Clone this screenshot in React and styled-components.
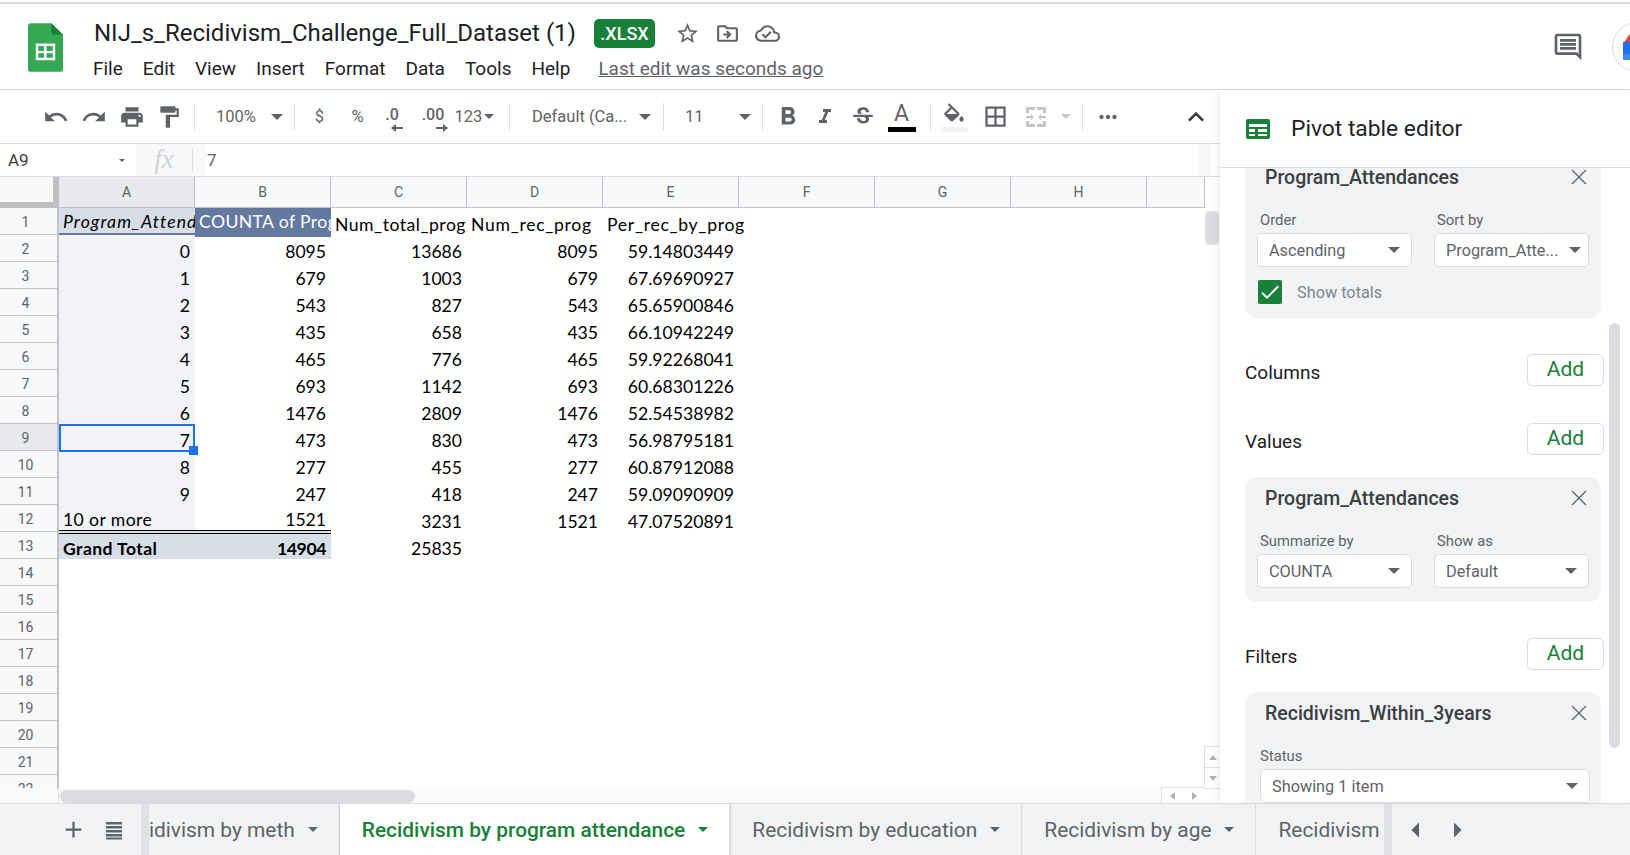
import styled, { createGlobalStyle } from 'styled-components';
import {
  MdUndo, MdRedo, MdPrint, MdFormatPaint, MdFormatBold, MdFormatItalic, MdStrikethroughS,
  MdBorderAll, MdMoreHoriz, MdExpandLess, MdStarBorder, MdOutlineDriveFileMove,
  MdOutlineCloudDone, MdOutlineComment, MdCheck, MdAdd, MdArrowLeft, MdArrowRight,
} from 'react-icons/md';

const rows = [
  ['0', '8095', '13686', '8095', '59.14803449'],
  ['1', '679', '1003', '679', '67.69690927'],
  ['2', '543', '827', '543', '65.65900846'],
  ['3', '435', '658', '435', '66.10942249'],
  ['4', '465', '776', '465', '59.92268041'],
  ['5', '693', '1142', '693', '60.68301226'],
  ['6', '1476', '2809', '1476', '52.54538982'],
  ['7', '473', '830', '473', '56.98795181'],
  ['8', '277', '455', '277', '60.87912088'],
  ['9', '247', '418', '247', '59.09090909'],
];
const columns = ['A', 'B', 'C', 'D', 'E', 'F', 'G', 'H'];
const menus = ['File', 'Edit', 'View', 'Insert', 'Format', 'Data', 'Tools', 'Help'];

const Global = createGlobalStyle`
  html, body { margin: 0; padding: 0; background: #fff; }
  body { font-family: Roboto, "Liberation Sans", sans-serif; }
`;

const Page = styled.div`
  width: 1630px;
  height: 855px;
  overflow: hidden;
  display: flex;
  flex-direction: column;
  position: relative;
`;

/* header */
const Header = styled.header`
  height: 85px;
  margin-top: 2px;
  border-top: 2px solid #dadce0;
  border-bottom: 1px solid #dadce0;
  flex: none;
  display: flex;
  position: relative;
`;
const Logo = styled.svg`
  width: 35px;
  height: 49px;
  margin: 19px 0 0 28px;
  flex: none;
`;
const HeaderText = styled.div`
  margin-left: 31px;
  display: flex;
  flex-direction: column;
`;
const TitleRow = styled.div`
  display: flex;
  align-items: center;
  height: 30px;
  margin-top: 14px;
  color: #5f6368;
`;
const Title = styled.div`
  font-size: 24px;
  color: #202124;
  width: 500px;
  white-space: nowrap;
`;
const Badge = styled.span`
  width: 61px;
  height: 29px;
  border-radius: 5px;
  background: #188038;
  color: #fff;
  font-size: 18px;
  font-weight: 500;
  display: flex;
  align-items: center;
  justify-content: center;
`;
const TitleIcons = styled.div`
  display: flex;
  gap: 15px;
  margin-left: 20px;
  font-size: 25px;
  svg { display: block; }
`;
const MenuRow = styled.div`
  display: flex;
  align-items: center;
  margin: 7px 0 0 -1px;
  height: 26px;
  font-size: 19px;
  color: #202124;
`;
const Menu = styled.span`
  margin-right: 20px;
`;
const LastEdit = styled.span`
  margin-left: 8px;
  color: #5f6368;
  text-decoration: underline;
  white-space: nowrap;
`;
const HeaderRight = styled.div`
  margin-left: auto;
  display: flex;
  align-items: center;
  gap: 28px;
  margin-right: -32px;
  color: #5f6368;
  font-size: 32px;
  svg { display: block; }
`;
const Avatar = styled.div`
  width: 50px;
  height: 50px;
  border-radius: 50%;
  border: 1px solid #dadce0;
  box-sizing: border-box;
  overflow: hidden;
  display: flex;
  align-items: center;
  padding-left: 10px;
`;

/* body */
const Body = styled.div`
  flex: 1;
  display: flex;
  min-height: 0;
`;
const Main = styled.main`
  width: 1220px;
  flex: none;
  display: flex;
  flex-direction: column;
`;
const Toolbar = styled.div`
  height: 53px;
  flex: none;
  border-bottom: 1px solid #dadce0;
  display: flex;
  align-items: center;
  color: #5f6368;
`;
const Tool = styled.div`
  width: ${(p) => p.$w}px;
  height: ${(p) => p.$h || 30}px;
  margin-left: ${(p) => p.$ml || 0}px;
  padding: ${(p) => p.$pad || 0};
  gap: ${(p) => p.$gap || 0}px;
  box-sizing: border-box;
  flex: none;
  display: flex;
  align-items: center;
  justify-content: ${(p) => p.$justify || 'center'};
  font-size: ${(p) => p.$size || 26}px;
  color: ${(p) => p.$color || '#5f6368'};
  position: relative;
  svg { display: block; }
`;
const ToolText = styled(Tool)`
  font-size: 16.5px;
  white-space: nowrap;
`;
const Sep = styled.div`
  width: 1px;
  height: 27px;
  background: #dadce0;
  flex: none;
`;
const Caret = styled.span`
  width: 0;
  height: 0;
  flex: none;
  border-left: ${(p) => p.$s || 5}px solid transparent;
  border-right: ${(p) => p.$s || 5}px solid transparent;
  border-top: ${(p) => p.$s || 5}px solid ${(p) => p.$color || '#5f6368'};
`;
const StackIcon = styled.div`
  display: flex;
  flex-direction: column;
  align-items: center;
  font-size: 26px;
  gap: 1px;
  svg { display: block; }
`;
const ColorBar = styled.div`
  width: ${(p) => p.$w || 28}px;
  height: 5px;
  background: ${(p) => p.$c};
`;
const ColorLetter = styled.span`
  font-size: 23px;
  line-height: 24px;
  color: #5f6368;
`;
const Decimal = styled.div`
  font-size: 16px;
  font-weight: 500;
  line-height: 16px;
  display: flex;
  flex-direction: column;
  align-items: center;
  margin-top: 6px;
  svg { display: block; margin-left: ${(p) => p.$shift}px; }
`;

const FormulaBar = styled.div`
  height: 32px;
  flex: none;
  border-bottom: 1px solid #dadce0;
  display: flex;
  align-items: center;
  color: #3c4043;
  font-size: 17px;
`;
const NameBox = styled.div`
  width: 136px;
  padding: 0 11px 0 8px;
  box-sizing: border-box;
  display: flex;
  align-items: center;
  justify-content: space-between;
  flex: none;
`;
const Fx = styled.div`
  width: 71px;
  height: 100%;
  flex: none;
  background: #f8f9fa;
  display: flex;
  align-items: center;
  justify-content: flex-end;
`;
const FxGlyph = styled.span`
  font-family: "Liberation Serif", serif;
  font-style: italic;
  font-size: 27px;
  color: #d0d2d5;
  width: 57px;
  height: 24px;
  line-height: 23px;
  text-align: center;
  border-right: 1px solid #dadce0;
  margin-right: 14px;
  box-sizing: border-box;
`;
const FormulaValue = styled.div`
  flex: 1;
  color: #5f6368;
`;
const FormulaEnd = styled.div`
  width: 14px;
  height: 100%;
  margin-right: 9px;
  background: #f8f9fa;
`;

const Sheet = styled.div`
  flex: 1;
  min-height: 0;
  overflow: hidden;
  position: relative;
`;
const Grid = styled.div`
  display: grid;
  grid-template-columns: 59px repeat(8, 136px) 58px;
  grid-auto-rows: 27px;
  grid-template-rows: 31px;
  font-family: Lato, "Liberation Sans", sans-serif;
  font-size: 17.6px;
  color: #000;
`;
const Corner = styled.div`
  background: #f8f9fa;
  border-right: 6px solid #c0c0c0;
  border-bottom: 6px solid #c0c0c0;
  box-sizing: border-box;
`;
const ColHead = styled.div`
  font-family: Roboto, sans-serif;
  font-size: 14px;
  color: #5f6368;
  background: ${(p) => (p.$active ? '#e8eaed' : '#f8f9fa')};
  border-right: 1px solid #c0c4c8;
  border-bottom: 1px solid #c0c4c8;
  box-sizing: border-box;
  display: flex;
  align-items: center;
  justify-content: center;
`;
const RowHead = styled.div`
  font-family: Roboto, sans-serif;
  font-size: 14px;
  color: #5f6368;
  background: ${(p) => (p.$active ? '#e8eaed' : '#f8f9fa')};
  border-right: 2px solid #c0c4c8;
  border-bottom: 1px solid #c0c4c8;
  box-sizing: border-box;
  display: flex;
  align-items: center;
  justify-content: center;
  padding: 2px 6px 0 0;
`;
const Cell = styled.div`
  box-sizing: border-box;
  display: flex;
  align-items: flex-end;
  justify-content: ${(p) => (p.$right ? 'flex-end' : 'flex-start')};
  padding: 0 5px 1px 4px;
  white-space: nowrap;
  line-height: 18px;
  min-width: 0;
  overflow: ${(p) => (p.$spill ? 'visible' : 'hidden')};
  background: ${(p) => p.$bg || 'transparent'};
  color: ${(p) => p.$color || '#000'};
  font-style: ${(p) => (p.$italic ? 'italic' : 'normal')};
  font-weight: ${(p) => (p.$bold ? 700 : 400)};
  letter-spacing: ${(p) => p.$ls || 0}px;
`;
const HeadCell = styled(Cell)`
  height: 29px;
  border-bottom: ${(p) => (p.$band ? '4px solid #6479a0' : 'none')};
  line-height: ${(p) => (p.$band ? 20 : 22)}px;
`;
const TotalCell = styled(Cell)`
  margin-top: -2px;
  border-top: 4px double #000;
  line-height: 19px;
  padding-bottom: 1px;
`;
const LastRowCell = styled(Cell)`
  height: 25px;
  line-height: 21px;
  padding-bottom: 0;
`;
const Selection = styled.div`
  position: absolute;
  left: 59px;
  top: 247px;
  width: 136px;
  height: 28px;
  border: 2px solid #1a73e8;
  box-sizing: border-box;
  &::after {
    content: '';
    position: absolute;
    right: -5px;
    bottom: -5px;
    width: 9px;
    height: 9px;
    background: #1a73e8;
  }
`;
const VScroll = styled.div`
  position: absolute;
  top: 34px;
  right: 1px;
  width: 14px;
  height: 34px;
  background: #dadce0;
  border-radius: 5px;
`;
const SheetRail = styled.div`
  position: absolute;
  left: 0;
  right: 0;
  bottom: 0;
  height: 15px;
  background: #fafafa;
  display: flex;
  align-items: flex-end;
`;
const RailHead = styled.div`
  width: 59px;
  height: 100%;
  border-right: 1px solid #e0e0e0;
  box-sizing: border-box;
`;
const HScroll = styled.div`
  width: 355px;
  height: 13px;
  margin-left: 1px;
  background: #dadce0;
  border-radius: 7px;
`;
const ScrollBtns = styled.div`
  position: absolute;
  right: 0;
  bottom: 0;
  width: 15px;
  background: #fff;
  border-left: 1px solid #e0e0e0;
  display: flex;
  flex-direction: column;
`;
const ScrollBtn = styled.div`
  height: ${(p) => p.$h || 21}px;
  border-top: 1px solid #e0e0e0;
  box-sizing: border-box;
  display: flex;
  align-items: center;
  justify-content: center;
`;
const SmallUp = styled.span`
  border-left: 4px solid transparent;
  border-right: 4px solid transparent;
  border-bottom: 5px solid #b0b3b7;
`;
const SmallDown = styled.span`
  border-left: 4px solid transparent;
  border-right: 4px solid transparent;
  border-top: 5px solid #b0b3b7;
`;
const HBtns = styled.div`
  position: absolute;
  right: 15px;
  bottom: 0;
  height: 15px;
  width: 43px;
  border-left: 1px solid #e0e0e0;
  border-top: 1px solid #e0e0e0;
  background: #fff;
  display: flex;
  align-items: center;
  justify-content: space-around;
`;
const SmallLeft = styled.span`
  border-top: 4px solid transparent;
  border-bottom: 4px solid transparent;
  border-right: 5px solid #b0b3b7;
`;
const SmallRight = styled.span`
  border-top: 4px solid transparent;
  border-bottom: 4px solid transparent;
  border-left: 5px solid #b0b3b7;
`;

/* sidebar */
const Sidebar = styled.aside`
  width: 410px;
  flex: none;
  display: flex;
  flex-direction: column;
  position: relative;
  box-shadow: -3px 0 6px rgba(60, 64, 67, 0.08);
  background: #fff;
`;
const SideHead = styled.div`
  height: 77px;
  flex: none;
  border-bottom: 1px solid #dadce0;
  display: flex;
  align-items: center;
  padding-left: 26px;
  gap: 21px;
  font-size: 22.8px;
  color: #202124;
`;
const SideBody = styled.div`
  flex: 1;
  min-height: 0;
  overflow: hidden;
  padding-left: 25px;
`;
const Card = styled.section`
  width: 356px;
  background: #f1f3f4;
  border-radius: 12px;
  padding-bottom: 14px;
  margin-top: ${(p) => p.$top || 0}px;
`;
const CardTitle = styled.div`
  height: 42px;
  padding: 0 14px 0 20px;
  display: flex;
  align-items: center;
  justify-content: space-between;
  font-size: 19.5px;
  font-weight: 500;
  color: #3c4043;
  svg { display: block; }
`;
const Fields = styled.div`
  display: flex;
  gap: 22px;
  padding-left: 12px;
`;
const Field = styled.div`
  width: ${(p) => p.$w || 155}px;
`;
const FieldLabel = styled.div`
  height: 35px;
  padding: 12px 0 0 3px;
  box-sizing: border-box;
  font-size: 14.8px;
  line-height: 20px;
  color: #5f6368;
`;
const Select = styled.div`
  height: 34px;
  margin-left: ${(p) => p.$inset || 0}px;
  border: 1px solid #dadce0;
  border-radius: 5px;
  background: #fff;
  box-sizing: border-box;
  padding: 0 ${(p) => p.$pr || 11}px 0 11px;
  display: flex;
  align-items: center;
  justify-content: space-between;
  font-size: 16.3px;
  color: #5f6368;
  white-space: nowrap;
`;
const CheckRow = styled.div`
  display: flex;
  align-items: center;
  margin: 13px 0 0 13px;
  height: 24px;
  gap: 15px;
  font-size: 16.3px;
  color: #80868b;
`;
const Check = styled.div`
  width: 24px;
  height: 24px;
  background: #188038;
  border-radius: 2px;
  color: #fff;
  font-size: 24px;
  svg { display: block; }
`;
const Section = styled.div`
  width: 359px;
  height: 32px;
  margin: ${(p) => p.$top}px 0 ${(p) => p.$bottom}px;
  display: flex;
  align-items: center;
  justify-content: space-between;
`;
const SectionName = styled.span`
  font-size: 19px;
  padding-top: 4px;
  color: #202124;
`;
const AddButton = styled.button`
  width: 77px;
  height: 32px;
  border: 1px solid #dadce0;
  border-radius: 5px;
  background: #fff;
  color: #188038;
  font: 400 21px Roboto, sans-serif;
  padding: 0 0 2px;
`;
const SideScroll = styled.div`
  position: absolute;
  left: 389px;
  top: 233px;
  width: 11px;
  height: 425px;
  background: #dadce0;
  border-radius: 6px;
`;

/* footer */
const Footer = styled.footer`
  height: 51px;
  flex: none;
  background: #f1f3f4;
  border-top: 1px solid #dadce0;
  display: flex;
  align-items: center;
  color: #5f6368;
`;
const FooterControls = styled.div`
  width: 141px;
  flex: none;
  display: flex;
  align-items: center;
  justify-content: flex-end;
  gap: 17px;
  padding-right: 17px;
  box-sizing: border-box;
  font-size: 27px;
  svg { display: block; }
`;
const TabStrip = styled.div`
  width: 1251px;
  height: 100%;
  flex: none;
  overflow: hidden;
  display: flex;
  box-sizing: border-box;
  border-left: 8px solid #dfe1e4;
  border-right: 8px solid #dfe1e4;
`;
const Tab = styled.div`
  flex: none;
  height: 100%;
  box-sizing: border-box;
  margin-left: ${(p) => p.$shift || 0}px;
  padding: 0 21px 0 22px;
  display: flex;
  align-items: center;
  gap: 13px;
  font-size: 20.9px;
  font-weight: ${(p) => (p.$active ? 500 : 400)};
  color: ${(p) => (p.$active ? '#188038' : '#5f6368')};
  background: ${(p) => (p.$active ? '#fff' : 'transparent')};
  border-right: 1px solid #dadce0;
  white-space: nowrap;
  box-shadow: ${(p) => (p.$active ? '0 0 3px rgba(60,64,67,.3)' : 'none')};
`;
const Pager = styled.div`
  display: flex;
  gap: 5px;
  margin-left: 6px;
  font-size: 36px;
  svg { display: block; }
`;

function Dec({ label, dir }) {
  return (
    <Decimal $shift={dir === 'left' ? 10 : 18}>
      {label}
      <svg width="12" height="10" viewBox="0 0 12 10" fill="#5f6368">
        {dir === 'left'
          ? <path d="M0 5l5-4v3h7v2H5v3z" />
          : <path d="M12 5L7 1v3H0v2h7v3z" />}
      </svg>
    </Decimal>
  );
}

function CloseIcon() {
  return (
    <svg width="16" height="16" viewBox="0 0 16 16" stroke="#5f6368" strokeWidth="1.3" fill="none">
      <path d="M1 1l14 14M15 1L1 15" />
    </svg>
  );
}

function Dropdown({ children, pr, inset }) {
  return <Select $pr={pr} $inset={inset}><span>{children}</span><Caret $s={6} /></Select>;
}

export default function App() {
  return (
    <Page>
      <Global />
      <Header>
        <Logo viewBox="0 0 36 50">
          <path d="M3 0h21l12 12v35a3 3 0 0 1-3 3H3a3 3 0 0 1-3-3V3a3 3 0 0 1 3-3z" fill="#34a853" />
          <path d="M24 0l12 12H27a3 3 0 0 1-3-3z" fill="#188038" />
          <path d="M8 21h20v17H8zm2.5 2.5v5h6v-5zm8.500 0v5h6.500v-5zm-8.500 7.500v4.500h6V31zm8.500 0v4.500h6.500V31z" fill="#fff" fillRule="evenodd" />
        </Logo>
        <HeaderText>
          <TitleRow>
            <Title>NIJ_s_Recidivism_Challenge_Full_Dataset (1)</Title>
            <Badge>.XLSX</Badge>
            <TitleIcons>
              <MdStarBorder />
              <MdOutlineDriveFileMove />
              <MdOutlineCloudDone />
            </TitleIcons>
          </TitleRow>
          <MenuRow>
            {menus.map((m) => <Menu key={m}>{m}</Menu>)}
            <LastEdit>Last edit was seconds ago</LastEdit>
          </MenuRow>
        </HeaderText>
        <HeaderRight>
          <MdOutlineComment />
          <Avatar>
            <svg width="16" height="30" viewBox="0 0 16 30">
              <path d="M8 0L0 12h16z" fill="#ea4335" />
              <rect y="10" width="16" height="12" fill="#1a73e8" />
              <rect y="22" width="16" height="6" fill="#4285f4" />
            </svg>
          </Avatar>
        </HeaderRight>
      </Header>

      <Body>
        <Main>
          <Toolbar>
            <Tool $w={38} $ml={37}><MdUndo /></Tool>
            <Tool $w={38}><MdRedo /></Tool>
            <Tool $w={38}><MdPrint /></Tool>
            <Tool $w={36}><MdFormatPaint /></Tool>
            <Tool $w={7} />
            <Sep />
            <ToolText $w={99} $justify="space-between" $pad="0 11px 0 21px">
              100%<Caret $s={6} />
            </ToolText>
            <Sep />
            <ToolText $w={49} $size={18}>$</ToolText>
            <ToolText $w={27}>%</ToolText>
            <Tool $w={40} $size={16} $ml={1}><Dec label=".0" dir="left" /></Tool>
            <Tool $w={42} $size={16}><Dec label=".00" dir="right" /></Tool>
            <ToolText $w={45} $gap={2} $ml={-2}>123<Caret /></ToolText>
            <Tool $w={12} />
            <Sep />
            <ToolText $w={153} $justify="space-between" $pad="0 12px 0 22px">
              Default (Ca...<Caret $s={6} />
            </ToolText>
            <Sep />
            <ToolText $w={98} $justify="space-between" $pad="0 11px 0 21px">
              11<Caret $s={6} />
            </ToolText>
            <Sep />
            <Tool $w={50} $size={30}><MdFormatBold /></Tool>
            <Tool $w={24} $size={30}><MdFormatItalic /></Tool>
            <Tool $w={50} $size={26} $ml={1}><MdStrikethroughS /></Tool>
            <Tool $w={27} $h={40}>
              <StackIcon><ColorLetter>A</ColorLetter><ColorBar $c="#000" /></StackIcon>
            </Tool>
            <Tool $w={15} />
            <Sep />
            <Tool $w={46} $h={40}>
              <StackIcon>
                <svg width="26" height="24" viewBox="0 0 24 20" fill="#5f6368">
                  <path fillRule="evenodd" d="M16.56 8.94L7.62 0 6.21 1.41l2.38 2.38-5.15 5.15c-.59.59-.59 1.54 0 2.12l5.5 5.5c.29.29.68.44 1.06.44s.77-.15 1.06-.44l5.5-5.500c.59-.58.59-1.530 0-2.120zM5.210 10L10 5.210 14.790 10H5.210zM19 11.500s-2 2.170-2 3.500c0 1.100.9 2 2 2s2-.9 2-2c0-1.330-2-3.500-2-3.500z" />
                </svg>
                <ColorBar $c="#f1f3f4" />
              </StackIcon>
            </Tool>
            <Tool $w={32} $size={27} $ml={2}><MdBorderAll /></Tool>
            <Tool $w={50}>
              <svg width="24" height="24" viewBox="0 0 24 24" fill="#c4c7c9">
                <path d="M2 2h9v3H5v3H2zM13 2h9v6h-3V5h-6zM2 16h3v3h6v3H2zM19 16h3v6h-9v-3h6zM2 11h5V9l3 3-3 3v-2H2zM22 11h-5V9l-3 3 3 3v-2h5z" />
              </svg>
            </Tool>
            <Tool $w={10}><Caret $color="#c4c7c9" /></Tool>
            <Tool $w={11} />
            <Sep />
            <Tool $w={50}><MdMoreHoriz /></Tool>
            <Tool $w={38} $ml={44} $size={32} $color="#3c4043"><MdExpandLess /></Tool>
          </Toolbar>

          <FormulaBar>
            <NameBox>A9<Caret $s={3} /></NameBox>
            <Fx><FxGlyph>fx</FxGlyph></Fx>
            <FormulaValue>7</FormulaValue>
            <FormulaEnd />
          </FormulaBar>

          <Sheet>
            <Grid>
              <Corner />
              {columns.map((c, i) => <ColHead key={c} $active={i === 0}>{c}</ColHead>)}
              <ColHead />

              <RowHead>1</RowHead>
              <HeadCell $italic $bg="#d7dee8" $band $ls={1.1}>Program_Attendances</HeadCell>
              <HeadCell $bg="#6479a0" $color="#fff" $band $ls={0.4}>COUNTA of Program_Attendances</HeadCell>
              <HeadCell $ls={0.5}>Num_total_prog</HeadCell>
              <HeadCell $ls={0.7}>Num_rec_prog</HeadCell>
              <HeadCell $spill $ls={0.7}>Per_rec_by_prog</HeadCell>
              <Cell /><Cell /><Cell /><Cell />

              {rows.map((r, i) => (
                <RowLine key={r[0]} n={i + 2} r={r} />
              ))}

              <RowHead>12</RowHead>
              <LastRowCell $bg="#f1f3f8" $ls={0.4}>10 or more</LastRowCell>
              <LastRowCell $right>1521</LastRowCell>
              <Cell $right>3231</Cell>
              <Cell $right>1521</Cell>
              <Cell $right>47.07520891</Cell>
              <Cell /><Cell /><Cell /><Cell />

              <RowHead>13</RowHead>
              <TotalCell $bold $bg="#d7dee8" $ls={0.4}>Grand Total</TotalCell>
              <TotalCell $bold $right $bg="#d7dee8" $ls={-0.4}>14904</TotalCell>
              <Cell $right>25835</Cell>
              <Cell /><Cell /><Cell /><Cell /><Cell /><Cell />

              {Array.from({ length: 9 }, (_, i) => (
                <EmptyRow key={i} n={i + 14} />
              ))}
            </Grid>
            <Selection />
            <VScroll />
            <SheetRail>
              <RailHead />
              <HScroll />
            </SheetRail>
            <ScrollBtns>
              <ScrollBtn><SmallUp /></ScrollBtn>
              <ScrollBtn><SmallDown /></ScrollBtn>
              <ScrollBtn $h={15} />
            </ScrollBtns>
            <HBtns><SmallLeft /><SmallRight /></HBtns>
          </Sheet>
        </Main>

        <Sidebar>
          <SideHead>
            <svg width="24" height="20" viewBox="0 0 24 20" fill="#188038">
              <path d="M2 0h20a2 2 0 0 1 2 2v16a2 2 0 0 1-2 2H2a2 2 0 0 1-2-2V2a2 2 0 0 1 2-2zm1 5v3h18V5zm0 5v3h6v-3zm9 0v3h9v-3zm-9 5v2h6v-2zm9 0v2h9v-2z" fillRule="evenodd" />
            </svg>
            <span>Pivot table editor</span>
          </SideHead>
          <SideBody>
            <Card $top={-12}>
              <CardTitle>Program_Attendances<CloseIcon /></CardTitle>
              <Fields>
                <Field>
                  <FieldLabel>Order</FieldLabel>
                  <Dropdown>Ascending</Dropdown>
                </Field>
                <Field>
                  <FieldLabel>Sort by</FieldLabel>
                  <Dropdown pr={7}>Program_Atte...</Dropdown>
                </Field>
              </Fields>
              <CheckRow>
                <Check><MdCheck /></Check>
                Show totals
              </CheckRow>
            </Card>
            <Section $top={36} $bottom={37}>
              <SectionName>Columns</SectionName><AddButton>Add</AddButton>
            </Section>
            <Section $top={0} $bottom={22}>
              <SectionName>Values</SectionName><AddButton>Add</AddButton>
            </Section>
            <Card>
              <CardTitle>Program_Attendances<CloseIcon /></CardTitle>
              <Fields>
                <Field>
                  <FieldLabel>Summarize by</FieldLabel>
                  <Dropdown>COUNTA</Dropdown>
                </Field>
                <Field>
                  <FieldLabel>Show as</FieldLabel>
                  <Dropdown>Default</Dropdown>
                </Field>
              </Fields>
            </Card>
            <Section $top={36} $bottom={22}>
              <SectionName>Filters</SectionName><AddButton>Add</AddButton>
            </Section>
            <Card>
              <CardTitle>Recidivism_Within_3years<CloseIcon /></CardTitle>
              <Fields>
                <Field $w={333}>
                  <FieldLabel>Status</FieldLabel>
                  <Dropdown inset={3}>Showing 1 item</Dropdown>
                </Field>
              </Fields>
            </Card>
          </SideBody>
          <SideScroll />
        </Sidebar>
      </Body>

      <Footer>
        <FooterControls>
          <MdAdd />
          <svg width="20" height="20" viewBox="0 0 20 20" fill="#5f6368">
            <rect x="2" y="2" width="16" height="2.500" />
            <rect x="2" y="6" width="16" height="2.500" />
            <rect x="2" y="10" width="16" height="2.500" />
            <rect x="2" y="14" width="16" height="2.500" />
            <rect x="2" y="17.500" width="16" height="2" />
          </svg>
        </FooterControls>
        <TabStrip>
          <Tab $shift={-57}>Recidivism by meth<Caret /></Tab>
          <Tab $active>Recidivism by program attendance<Caret $color="#188038" /></Tab>
          <Tab>Recidivism by education<Caret /></Tab>
          <Tab>Recidivism by age<Caret /></Tab>
          <Tab>Recidivism by gender<Caret /></Tab>
        </TabStrip>
        <Pager>
          <MdArrowLeft />
          <MdArrowRight />
        </Pager>
      </Footer>
    </Page>
  );
}

function RowLine({ n, r }) {
  return (
    <>
      <RowHead $active={n === 9}>{n}</RowHead>
      <Cell $right $bg="#f1f3f8">{r[0]}</Cell>
      <Cell $right>{r[1]}</Cell>
      <Cell $right>{r[2]}</Cell>
      <Cell $right>{r[3]}</Cell>
      <Cell $right>{r[4]}</Cell>
      <Cell /><Cell /><Cell /><Cell />
    </>
  );
}

function EmptyRow({ n }) {
  return (
    <>
      <RowHead>{n}</RowHead>
      <Cell /><Cell /><Cell /><Cell /><Cell /><Cell /><Cell /><Cell /><Cell />
    </>
  );
}
